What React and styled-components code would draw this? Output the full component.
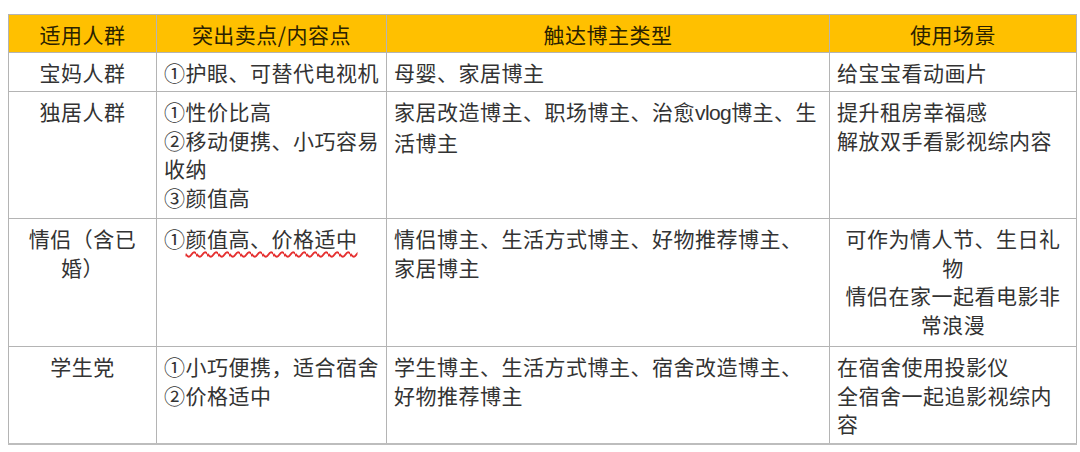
import React from "react";
import styled, { createGlobalStyle } from "styled-components";

const Global = createGlobalStyle`
  html, body { margin: 0; padding: 0; background: #fff; }
  body {
    padding: 14px 0 0 8px;
    font-family: "Noto Sans CJK SC", "Noto Sans", sans-serif;
  }
`;

const Table = styled.table`
  width: 1068px;
  table-layout: fixed;
  border-collapse: collapse;
  font-size: 21px;
  letter-spacing: 0.5px;
  line-height: 28.5px;
  color: #333;
  border-bottom: 2px solid #bdbdbd;
`;

const Row = styled.tr`
  height: ${(p) => p.$h}px;
`;

const HeadCell = styled.th`
  background: #ffc000;
  color: #2b2200;
  font-weight: 400;
  text-align: center;
  vertical-align: top;
  padding: 5px 7px 0;
  border: 1px solid #b4b4b4;
`;

const Cell = styled.td`
  text-align: ${(p) => (p.$center ? "center" : "left")};
  vertical-align: top;
  padding: 5px 7px 0;
  border: 1px solid #b4b4b4;
`;

const Line = styled.div``;

const Latin = styled.span`
  font-family: "Liberation Sans", "Noto Sans", sans-serif;
  letter-spacing: -0.6px;
`;

const Wavy = styled.span`
  text-decoration: underline wavy #e53030;
  text-decoration-thickness: 1.5px;
  text-underline-offset: 4px;
`;

const cols = [148, 230, 443, 247];

export default function App() {
  return (
    <>
      <Global />
      <Table>
        <colgroup>
          {cols.map((w, i) => (
            <col key={i} style={{ width: w }} />
          ))}
        </colgroup>
        <thead>
          <Row $h={38}>
            <HeadCell>适用人群</HeadCell>
            <HeadCell>突出卖点/内容点</HeadCell>
            <HeadCell>触达博主类型</HeadCell>
            <HeadCell>使用场景</HeadCell>
          </Row>
        </thead>
        <tbody>
          <Row $h={39}>
            <Cell $center>宝妈人群</Cell>
            <Cell>①护眼、可替代电视机</Cell>
            <Cell>母婴、家居博主</Cell>
            <Cell>给宝宝看动画片</Cell>
          </Row>
          <Row $h={127}>
            <Cell $center>独居人群</Cell>
            <Cell>
              <Line>①性价比高</Line>
              <Line>②移动便携、小巧容易收纳</Line>
              <Line>③颜值高</Line>
            </Cell>
            <Cell>
              家居改造博主、职场博主、治愈<Latin>vlog</Latin>博主、生活博主
            </Cell>
            <Cell>
              <Line>提升租房幸福感</Line>
              <Line>解放双手看影视综内容</Line>
            </Cell>
          </Row>
          <Row $h={128}>
            <Cell $center>情侣（含已婚）</Cell>
            <Cell>
              ①<Wavy>颜值高、价格适中</Wavy>
            </Cell>
            <Cell>情侣博主、生活方式博主、好物推荐博主、家居博主</Cell>
            <Cell $center>
              <Line>可作为情人节、生日礼物</Line>
              <Line>情侣在家一起看电影非常浪漫</Line>
            </Cell>
          </Row>
          <Row $h={97}>
            <Cell $center>学生党</Cell>
            <Cell>
              <Line>①小巧便携，适合宿舍</Line>
              <Line>②价格适中</Line>
            </Cell>
            <Cell>学生博主、生活方式博主、宿舍改造博主、好物推荐博主</Cell>
            <Cell>
              <Line>在宿舍使用投影仪</Line>
              <Line>全宿舍一起追影视综内容</Line>
            </Cell>
          </Row>
        </tbody>
      </Table>
    </>
  );
}
